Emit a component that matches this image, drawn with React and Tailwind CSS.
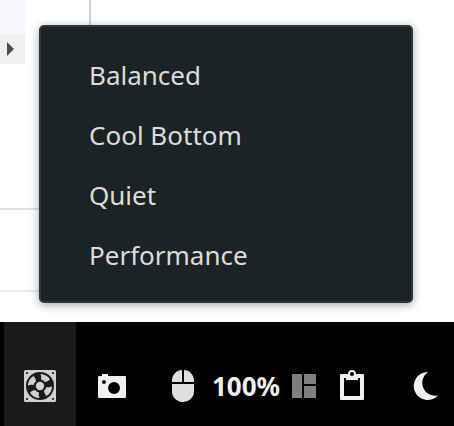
const modes = ["Balanced", "Cool Bottom", "Quiet", "Performance"];

function FanIcon() {
  return (
    <svg viewBox="0 0 32 32" className="size-8" aria-hidden="true">
      <rect width="32" height="32" rx="1.5" fill="#d0d0d0" />
      <g fill="#3a3a3a">
        <rect x="2" y="2" width="2" height="2" />
        <rect x="28" y="2" width="2" height="2" />
        <rect x="2" y="28" width="2" height="2" />
        <rect x="28" y="28" width="2" height="2" />
      </g>
      <circle cx="16" cy="16" r="14" fill="#1a1a1a" />
      <g fill="#d0d0d0">
        <path id="gap" d="M16.3 3.900A12 12 0 0 1 26 9.300C24.300 11.200 22.500 11.900 20.800 12.100C19.700 10.700 18.400 9.900 16.900 9.600C17.500 7.600 17.300 5.700 16.300 3.900Z" />
        <use href="#gap" transform="rotate(90 16 16)" />
        <use href="#gap" transform="rotate(180 16 16)" />
        <use href="#gap" transform="rotate(270 16 16)" />
        <circle cx="16" cy="16" r="4.2" />
      </g>
    </svg>
  );
}

function CameraIcon() {
  return (
    <svg viewBox="0 0 32 32" className="size-8" aria-hidden="true">
      <path
        fill="#f0f0f0"
        fillRule="evenodd"
        d="M6 4h6v2h17a1 1 0 0 1 1 1v20a1 1 0 0 1-1 1H3a1 1 0 0 1-1-1V7a1 1 0 0 1 1-1h3zM18 12a6 6 0 1 0 0 12a6 6 0 0 0 0-12zM8 10a2 2 0 1 0 0 4a2 2 0 0 0 0-4z"
      />
    </svg>
  );
}

function MouseIcon() {
  return (
    <svg viewBox="0 0 32 32" className="size-8" fill="#e0e0e0" aria-hidden="true">
      <path d="M14 0v12H4v-1C4 5 8 .5 14 0zM16 0c6 .5 10 5 10 11v1H16zM4 14h22v7.500a11 10.500 0 0 1-22 0z" />
    </svg>
  );
}

function TilesIcon() {
  return (
    <svg viewBox="0 0 32 32" className="size-8" fill="#808080" aria-hidden="true">
      <path d="M4 4h10v24H4zM16 4h12v10H16zM16 16h12v12H16z" />
    </svg>
  );
}

function ClipboardIcon() {
  return (
    <svg viewBox="0 0 32 32" className="size-8" fill="#f0f0f0" aria-hidden="true">
      <path
        fillRule="evenodd"
        d="M5 4h7a4 4 0 0 1 8 0h7a1 1 0 0 1 1 1v24a1 1 0 0 1-1 1H5a1 1 0 0 1-1-1V5a1 1 0 0 1 1-1zM8 8v18h16V8h-2v2H10V8zM16 2a2 2 0 1 0 0 4a2 2 0 0 0 0-4z"
      />
    </svg>
  );
}

function MoonIcon() {
  return (
    <svg viewBox="0 0 32 32" className="size-8" fill="#f0f0f0" aria-hidden="true">
      <path d="M18 2A14 14 0 1 0 28 25.500A13 13 0 0 1 18 2z" />
    </svg>
  );
}

function Backdrop() {
  return (
    <div className="h-[322px]" aria-hidden="true">
      <div className="flex h-[210px] w-30 items-start border-b-2 border-[#dfe1e6]">
        <div className="w-[25px]">
          <div className="h-[34px] bg-[#f6f8fb]" />
          <div className="flex h-[30px] items-center bg-[#f0f0f0] pl-[7px]">
            <svg viewBox="0 0 7 14" className="h-[14px] w-[7px]">
              <path d="M0 0L7 7L0 14z" fill="#4d4d4d" />
            </svg>
          </div>
        </div>
        <div className="h-16 w-[66px] border-r-2 border-[#cfd1d8]" />
      </div>
      <div className="h-[82px] w-30 border-b-2 border-[#e6e8ec]" />
    </div>
  );
}

export default function App() {
  return (
    <div className="relative flex min-h-screen flex-col bg-white font-['Noto_Sans',sans-serif] text-[26px] leading-8">
      <Backdrop />

      <div
        role="menu"
        aria-label="Fan profile"
        className="absolute top-[25px] right-[41px] left-[39px] flex flex-col rounded-[5px] border-2 border-[#303636] bg-[#1c2325] pt-[18px] pb-4 shadow-[0_2px_10px_rgba(0,0,0,0.35)]"
      >
        {modes.map((mode) => (
          <button
            key={mode}
            type="button"
            role="menuitem"
            className="flex h-15 items-center pl-12 text-left text-[#dcdcdc]"
          >
            {mode}
          </button>
        ))}
      </div>

      <div className="flex flex-1 items-stretch bg-black pl-1">
        <button type="button" aria-label="Fan profile" className="flex w-18 justify-center bg-[#1a1a1a] pt-12 pb-6">
          <FanIcon />
        </button>
        <button type="button" aria-label="Screenshot" className="flex w-18 justify-center pt-12 pb-6">
          <CameraIcon />
        </button>
        <button type="button" className="flex gap-3 pt-12 pr-1 pb-6 pl-5 font-bold text-[#f0f0f0]">
          <MouseIcon />
          100%
        </button>
        <button type="button" aria-label="Layouts" className="flex pt-12 pr-2 pb-6 pl-1">
          <TilesIcon />
        </button>
        <button type="button" aria-label="Clipboard" className="flex px-2 pt-12 pb-6">
          <ClipboardIcon />
        </button>
        <button type="button" aria-label="Night light" className="ml-auto flex px-3 pt-12 pb-6">
          <MoonIcon />
        </button>
      </div>
    </div>
  );
}
